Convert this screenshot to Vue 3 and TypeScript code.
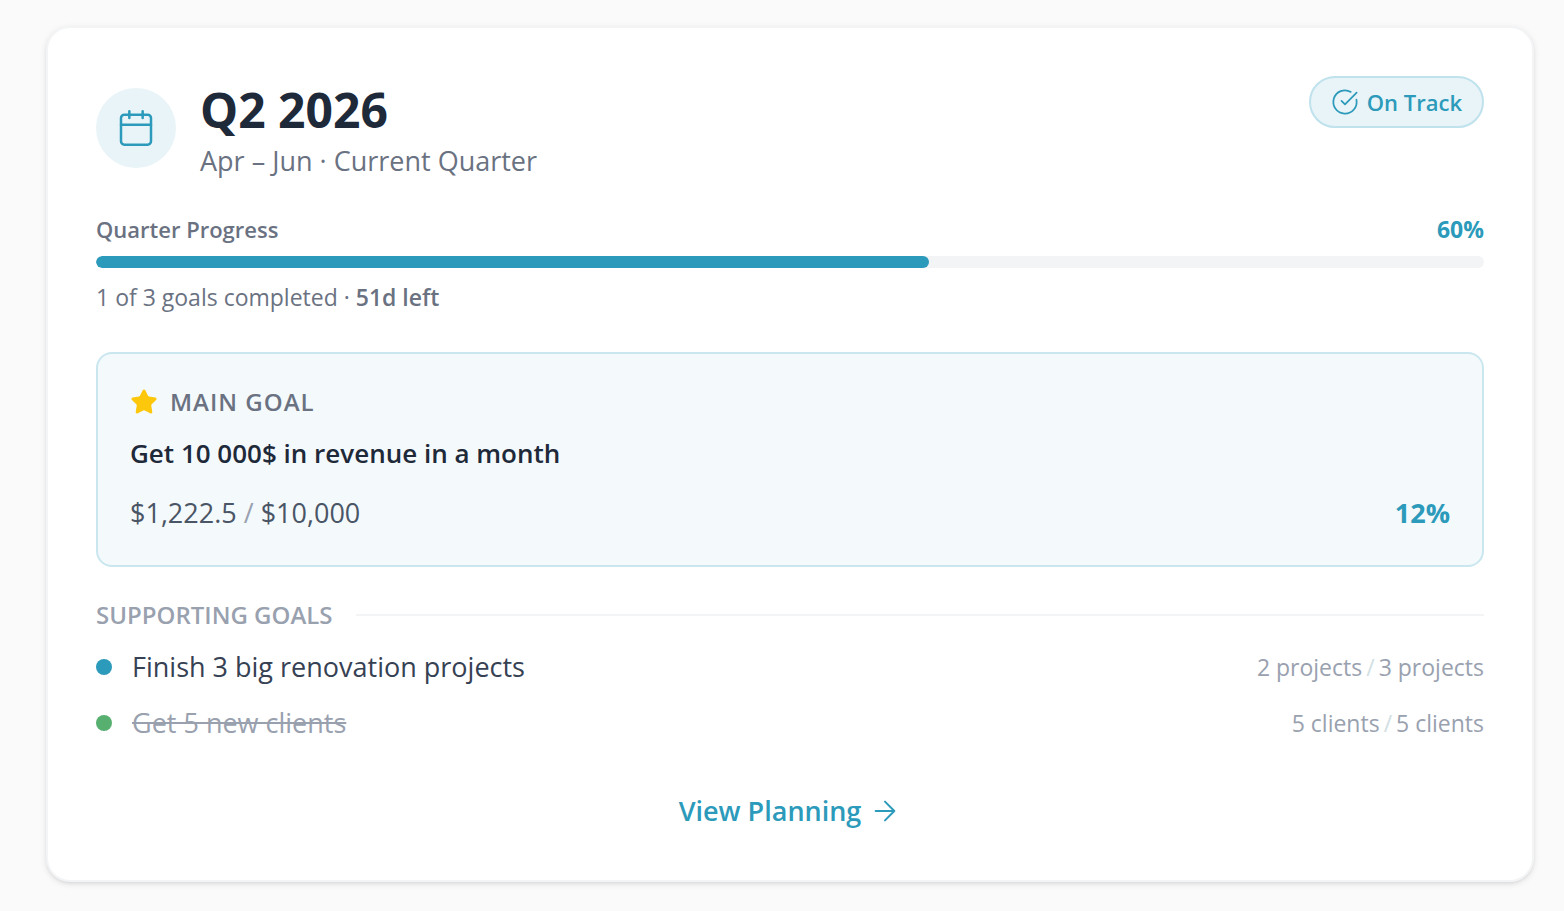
<script setup lang="ts">
interface SupportingGoal {
  id: number
  title: string
  current: string
  target: string
  done: boolean
}

const progress = 60
const supportingGoals: SupportingGoal[] = [
  { id: 1, title: 'Finish 3 big renovation projects', current: '2 projects', target: '3 projects', done: false },
  { id: 2, title: 'Get 5 new clients', current: '5 clients', target: '5 clients', done: true },
]
</script>

<template>
  <main class="page">
    <article class="card">
      <header class="header">
        <div class="badge-icon">
          <svg class="icon-calendar" viewBox="0 0 24 24" aria-hidden="true">
            <path d="M8 2v4M16 2v4M3 10h18" />
            <rect x="3" y="4" width="18" height="18" rx="2" />
          </svg>
        </div>
        <div class="heading">
          <h1 class="title">Q2 2026</h1>
          <p class="subtitle">Apr – Jun · Current Quarter</p>
        </div>
        <span class="status">
          <svg class="icon-small" viewBox="0 0 24 24" aria-hidden="true">
            <path d="M21.801 10A10 10 0 1 1 17 3.335" />
            <path d="m9 11 3 3L22 4" />
          </svg>
          On Track
        </span>
      </header>

      <section class="progress">
        <div class="progress-head">
          <span id="progress-label" class="progress-label">Quarter Progress</span>
          <span class="progress-value">{{ progress }}%</span>
        </div>
        <div
          class="track"
          role="progressbar"
          aria-labelledby="progress-label"
          aria-valuemin="0"
          aria-valuemax="100"
          :aria-valuenow="progress"
        >
          <div class="fill" :style="{ width: progress + '%' }"></div>
        </div>
        <p class="progress-note">1 of 3 goals completed · <strong>51d left</strong></p>
      </section>

      <section class="main-goal">
        <div class="main-label">
          <svg class="icon-small icon-star" viewBox="0 0 24 24" aria-hidden="true">
            <path
              d="M11.525 2.295a.53.53 0 0 1 .95 0l2.31 4.679a2.123 2.123 0 0 0 1.595 1.16l5.166.756a.53.53 0 0 1 .294.904l-3.736 3.638a2.123 2.123 0 0 0-.611 1.878l.882 5.14a.53.53 0 0 1-.771.56l-4.618-2.428a2.122 2.122 0 0 0-1.973 0L6.396 21.01a.53.53 0 0 1-.77-.56l.881-5.139a2.122 2.122 0 0 0-.611-1.879L2.16 9.795a.53.53 0 0 1 .294-.906l5.165-.755a2.122 2.122 0 0 0 1.597-1.16z"
            />
          </svg>
          <span>MAIN GOAL</span>
        </div>
        <h2 class="main-title">Get 10 000$ in revenue in a month</h2>
        <div class="main-values">
          <span>$1,222.5 <span class="slash">/</span> $10,000</span>
          <strong class="main-percent">12%</strong>
        </div>
      </section>

      <section>
        <div class="divider">
          <h3 class="divider-label">SUPPORTING GOALS</h3>
          <span class="divider-line"></span>
        </div>
        <ul class="goals">
          <li v-for="goal in supportingGoals" :key="goal.id" class="goal" :class="{ done: goal.done }">
            <span class="dot"></span>
            <span class="goal-label"><span class="goal-title">{{ goal.title }}</span></span>
            <span class="goal-values">
              <span>{{ goal.current }}</span><span class="goal-slash">/</span><span>{{ goal.target }}</span>
            </span>
          </li>
        </ul>
      </section>

      <footer class="footer">
        <a class="link" href="#planning">
          View Planning
          <svg class="icon-arrow" viewBox="0 0 24 24" aria-hidden="true">
            <path d="M5 12h14M12 5l7 7-7 7" />
          </svg>
        </a>
      </footer>
    </article>
  </main>
</template>

<style>
body {
  margin: 0;
  background: #fafafa;
}
</style>

<style scoped>
.page {
  box-sizing: border-box;
  padding: 26px 30px 29px 46px;
  font-family: 'Segoe UI', 'Open Sans', 'Noto Sans', sans-serif;
  font-size: 27px;
  color: #6a7282;
}

h1, h2, h3, p, ul {
  margin: 0;
  padding: 0;
}

svg {
  flex: none;
  fill: none;
  stroke: currentColor;
  stroke-width: 1.5;
  stroke-linecap: round;
  stroke-linejoin: round;
}

.card {
  padding: 48px;
  background: #fff;
  border: 2px solid #f3f4f6;
  border-radius: 24px;
  box-shadow: 0 2px 6px rgba(0, 0, 0, 0.1), 0 2px 4px -2px rgba(0, 0, 0, 0.1);
}

.header {
  display: flex;
  align-items: center;
  gap: 24px;
}

.badge-icon {
  display: flex;
  align-items: center;
  justify-content: center;
  width: 80px;
  height: 80px;
  border-radius: 50%;
  background: #e9f4f8;
  color: #2c9aba;
}

.icon-calendar {
  width: 40px;
  height: 40px;
}

.heading {
  flex: 1;
  padding-bottom: 2px;
}

.title {
  font-size: 48px;
  line-height: 68px;
  font-weight: 700;
  color: #1e2939;
}

.subtitle {
  line-height: 34px;
}

.status {
  display: flex;
  align-items: center;
  align-self: flex-start;
  gap: 8px;
  padding: 7px 20px;
  border: 2px solid #bfe2ed;
  border-radius: 26px;
  background: #e9f4f8;
  font-size: 22px;
  line-height: 34px;
  font-weight: 600;
  color: #2c9aba;
}

.icon-small {
  width: 28px;
  height: 28px;
}

.progress {
  margin-top: 32px;
  font-size: 23px;
  line-height: 34px;
}

.progress-head {
  display: flex;
  justify-content: space-between;
}

.progress-label {
  font-size: 22px;
  font-weight: 600;
}

.progress-value {
  font-weight: 700;
  color: #2c9aba;
}

.track {
  height: 12px;
  margin: 10px 0 12px;
  border-radius: 6px;
  background: #f3f4f6;
  overflow: hidden;
}

.fill {
  height: 100%;
  border-radius: 6px;
  background: #2c9aba;
}

.progress-note strong {
  font-weight: 600;
}

.main-goal {
  margin-top: 38px;
  padding: 31px 32px 33px;
  border: 2px solid #cae7ef;
  border-radius: 16px;
  background: #f4f9fc;
}

.main-label {
  display: flex;
  align-items: center;
  gap: 12px;
  font-size: 24px;
  line-height: 34px;
  font-weight: 600;
  letter-spacing: 1px;
}

.icon-star {
  color: #fdc70c;
  fill: #fdc70c;
}

.main-title {
  margin-top: 15px;
  font-size: 26px;
  line-height: 38px;
  font-weight: 600;
  color: #1e2939;
}

.main-values {
  display: flex;
  justify-content: space-between;
  margin-top: 22px;
  line-height: 38px;
  color: #4a5565;
}

.slash {
  color: #99a1af;
}

.main-percent {
  font-weight: 700;
  color: #2c9aba;
}

.divider {
  display: flex;
  align-items: center;
  gap: 24px;
  margin-top: 31px;
}

.divider-label {
  font-size: 24px;
  line-height: 34px;
  font-weight: 600;
  color: #99a1af;
}

.divider-line {
  flex: 1;
  height: 2px;
  background: #f3f4f6;
}

.goals {
  display: flex;
  flex-direction: column;
  gap: 16px;
  margin-top: 15px;
  list-style: none;
}

.goal {
  display: flex;
  align-items: center;
  gap: 20px;
  line-height: 40px;
}

.dot {
  width: 16px;
  height: 16px;
  border-radius: 50%;
  background: #2c9aba;
}

.goal-label {
  flex: 1;
}

.goal-title {
  color: #364153;
}

.goal-values {
  display: flex;
  gap: 4px;
  font-size: 23px;
  color: #99a1af;
}

.goal-slash {
  color: #d1e0e4;
}

.done .dot {
  background: #58b070;
}

.done .goal-title {
  color: #99a1af;
  text-decoration: line-through;
}

.footer {
  display: flex;
  justify-content: center;
  margin-top: 48px;
  padding-bottom: 1px;
}

.link {
  display: flex;
  align-items: center;
  gap: 8px;
  line-height: 40px;
  font-weight: 600;
  color: #2c9aba;
  text-decoration: none;
}

.icon-arrow {
  width: 32px;
  height: 32px;
}
</style>
